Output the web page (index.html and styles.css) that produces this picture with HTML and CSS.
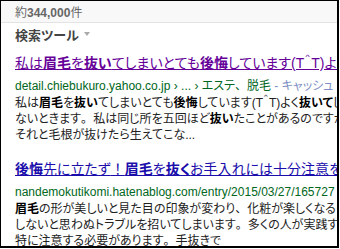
FILE: index.html
```html
<!DOCTYPE html>
<html lang="ja">
<head>
    <meta charset="UTF-8">
    <title>検索結果</title>
    <link rel="stylesheet" href="styles.css">
</head>
<body>
    <div class="frame">
        <div class="stats">約<b>344,000</b>件</div>
        <div class="tools">検索ツール <span class="arrow"></span></div>

        <div class="result">
            <a class="title visited" href="#">私は<b>眉毛</b>を<b>抜い</b>てしまいとても<b>後悔</b>しています(T＾T)よく抜いてしまう</a>
            <div class="url">detail.chiebukuro.yahoo.co.jp › ... › エステ<span class="fw">、</span>脱毛 <span class="cache">- キャッシュ</span></div>
            <p class="snippet">私は<b>眉毛</b>を<b>抜い</b>てしまいとても<b>後悔</b>しています(T＾T)よく<b>抜いて</b>しまう<br>ないときます<span class="fw">。</span>私は同じ所を五回ほど<b>抜い</b>たことがあるのですが<br>それと毛根が抜けたら生えてこな...</p>
        </div>

        <div class="result">
            <a class="title" href="#"><b>後悔</b>先に立たず<span class="fw">！</span><b>眉毛</b>を<b>抜く</b>お手入れには十分注意を</a>
            <div class="url">nandemokutikomi.hatenablog.com/entry/2015/03/27/165727</div>
            <p class="snippet"><b>眉毛</b>の形が美しいと見た目の印象が変わり<span class="fw">、</span>化粧が楽しくなるもの<br>しないと思わぬトラブルを招いてしまいます<span class="fw">。</span>多くの人が実践する<br>特に注意する必要があります<span class="fw">。</span>手抜きで</p>
        </div>
    </div>
</body>
</html>
```

FILE: styles.css
```css
* {
    margin: 0;
    padding: 0;
    box-sizing: border-box;
}

body {
    background: #fff;
    font-family: "Liberation Sans", "Noto Sans CJK JP", sans-serif;
    font-feature-settings: "palt";
    color: #222;
}

/* full-width punctuation keeps its em box */
.fw {
    font-feature-settings: normal;
}

.frame {
    width: 339px;
    height: 248px;
    border: 1px solid #000;
    border-right-width: 2px;
    border-bottom-width: 2px;
    overflow: hidden;
}

.stats {
    height: 22px;
    padding: 4px 0 0 14px;
    background: #f8f8f8;
    border-bottom: 1px solid #e3e3e3;
    font-size: 12px;
    line-height: 16px;
    color: #666;
}

.tools {
    display: flex;
    align-items: center;
    gap: 5px;
    padding: 2px 0 0 14px;
    height: 20px;
    font-size: 13px;
    font-weight: bold;
    color: #444;
}

.arrow {
    width: 0;
    height: 0;
    border-left: 3px solid transparent;
    border-right: 3px solid transparent;
    border-top: 4px solid #aaa;
}

.result {
    padding-left: 14px;
    white-space: nowrap;
}

.result + .result {
    margin-top: 17px;
}

.title {
    display: block;
    margin-top: 11px;
    font-size: 14px;
    line-height: 18px;
    color: #1a0dab;
    text-decoration: underline;
}

.title.visited {
    color: #609;
}

.result + .result .title {
    margin-top: 0;
}

.url {
    margin-top: 8px;
    font-size: 12px;
    line-height: 12px;
    color: #006621;
}

.cache {
    color: #7d8fc4;
}

.snippet {
    margin-top: 3px;
    font-size: 12px;
    line-height: 16px;
    color: #222;
}

.snippet b {
    color: #000;
}
```
